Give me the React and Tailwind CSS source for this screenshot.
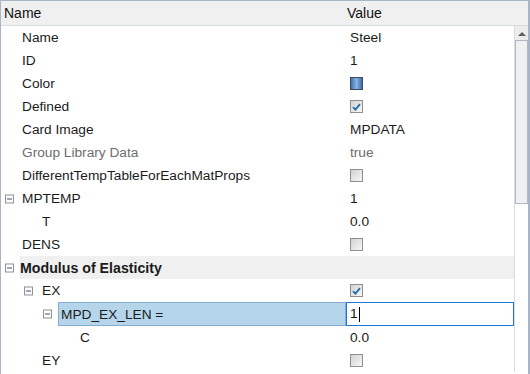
import React from "react";

const font = { fontFamily: '"Liberation Sans", Arial, sans-serif' };

function Minus() {
  return (
    <span className="flex h-[9px] w-[9px] items-center justify-center border border-[#919191] bg-white">
      <span className="h-px w-[5px] bg-[#3a4f7a]" />
    </span>
  );
}

function Check({ checked }) {
  return (
    <span className="flex h-[13px] w-[13px] items-center justify-center border border-[#8f8f8f] bg-linear-to-br from-[#d2d2d2] to-[#f7f7f7]">
      {checked && (
        <svg width="9" height="8" viewBox="0 0 9 8">
          <path d="M1 4.2 L3.4 6.6 L8 1.2" fill="none" stroke="#1e6ea8" strokeWidth="1.8" />
        </svg>
      )}
    </span>
  );
}

function Swatch() {
  return (
    <span className="block h-[13px] w-[13px] border border-[#3d4b5c] bg-linear-to-r from-[#3f72b6] via-[#8db4e0] to-[#3a6cb0]" />
  );
}

function Row({ toggle, togglePad, textPad, label, value, gray }) {
  return (
    <div className="flex h-[23px] items-center">
      <div className="relative flex h-full w-[345px] items-center">
        {toggle && (
          <span className="absolute top-1/2 -translate-y-1/2" style={{ left: togglePad }}>
            <Minus />
          </span>
        )}
        <span
          className={`whitespace-nowrap pt-[2px] ${gray ? "text-[#6d6d6d]" : "text-[#1b1b1b]"}`}
          style={{ paddingLeft: textPad }}
        >
          {label}
        </span>
      </div>
      <div className="flex h-full flex-1 items-center pl-[4px]">{value}</div>
    </div>
  );
}

const txt = (t, gray) => (
  <span className={`pt-[2px] ${gray ? "text-[#6d6d6d]" : "text-[#1b1b1b]"}`}>{t}</span>
);

export default function App() {
  return (
    <div
      className="relative h-[374px] w-[530px] overflow-hidden border-l border-t border-r-2 border-[#a7b5c4] bg-white text-[13.7px]"
      style={font}
    >
      <div className="flex h-[25px] items-center border-b border-[#d5dde3] bg-[#f0f0f0] pt-px text-[14px] text-[#111]">
        <span className="w-[346px] pl-[3px]">Name</span>
        <span>Value</span>
      </div>
      <div className="flex">
        <div className="flex-1">
          <Row textPad={21} label="Name" value={txt("Steel")} />
          <Row textPad={21} label="ID" value={txt("1")} />
          <Row textPad={21} label="Color" value={<Swatch />} />
          <Row textPad={21} label="Defined" value={<Check checked />} />
          <Row textPad={21} label="Card Image" value={txt("MPDATA")} />
          <Row textPad={21} label="Group Library Data" gray value={txt("true", true)} />
          <Row textPad={21} label="DifferentTempTableForEachMatProps" value={<Check />} />
          <Row toggle togglePad={4} textPad={21} label="MPTEMP" value={txt("1")} />
          <Row textPad={41} label="T" value={txt("0.0")} />
          <Row textPad={21} label="DENS" value={<Check />} />
          <div className="flex h-[23px] items-center">
            <div className="relative flex h-full w-[19px] items-center">
              <span className="absolute left-[4px] top-1/2 -translate-y-1/2">
                <Minus />
              </span>
            </div>
            <div className="flex h-full flex-1 items-center bg-[#f0f0f0] pt-[2px] text-[14.2px] font-bold text-[#1b1b1b]">
              Modulus of Elasticity
            </div>
          </div>
          <Row toggle togglePad={23} textPad={41} label="EX" value={<Check checked />} />
          <div className="flex h-[24px] items-stretch">
            <div className="relative flex w-[345px]">
              <span className="absolute left-[42px] top-1/2 -translate-y-1/2">
                <Minus />
              </span>
              <div className="ml-[57px] flex flex-1 items-center border border-[#86acd4] bg-[#b5d6ea] pl-[2px] pt-[2px] text-[#1b1b1b]">
                MPD_EX_LEN =
              </div>
            </div>
            <div className="flex flex-1 items-center border border-[#1c7ad6] bg-white pl-[3px] pt-[1px] text-[#111]">
              1<span className="ml-[1px] h-[15px] w-px bg-black" />
            </div>
          </div>
          <Row textPad={79} label="C" value={txt("0.0")} />
          <Row textPad={41} label="EY" value={<Check />} />
        </div>
        <div className="flex w-[14px] flex-col border-l border-[#d7dde3] bg-white">
          <div className="flex h-[14px] items-center justify-center bg-[#ececec]">
            <svg width="8" height="5" viewBox="0 0 8 5">
              <path d="M0 5 L4 1 L8 5 Z" fill="#606060" />
            </svg>
          </div>
          <div className="h-[164px] border border-[#adb9c6] bg-[#f0f0f0]" />
        </div>
      </div>
    </div>
  );
}
